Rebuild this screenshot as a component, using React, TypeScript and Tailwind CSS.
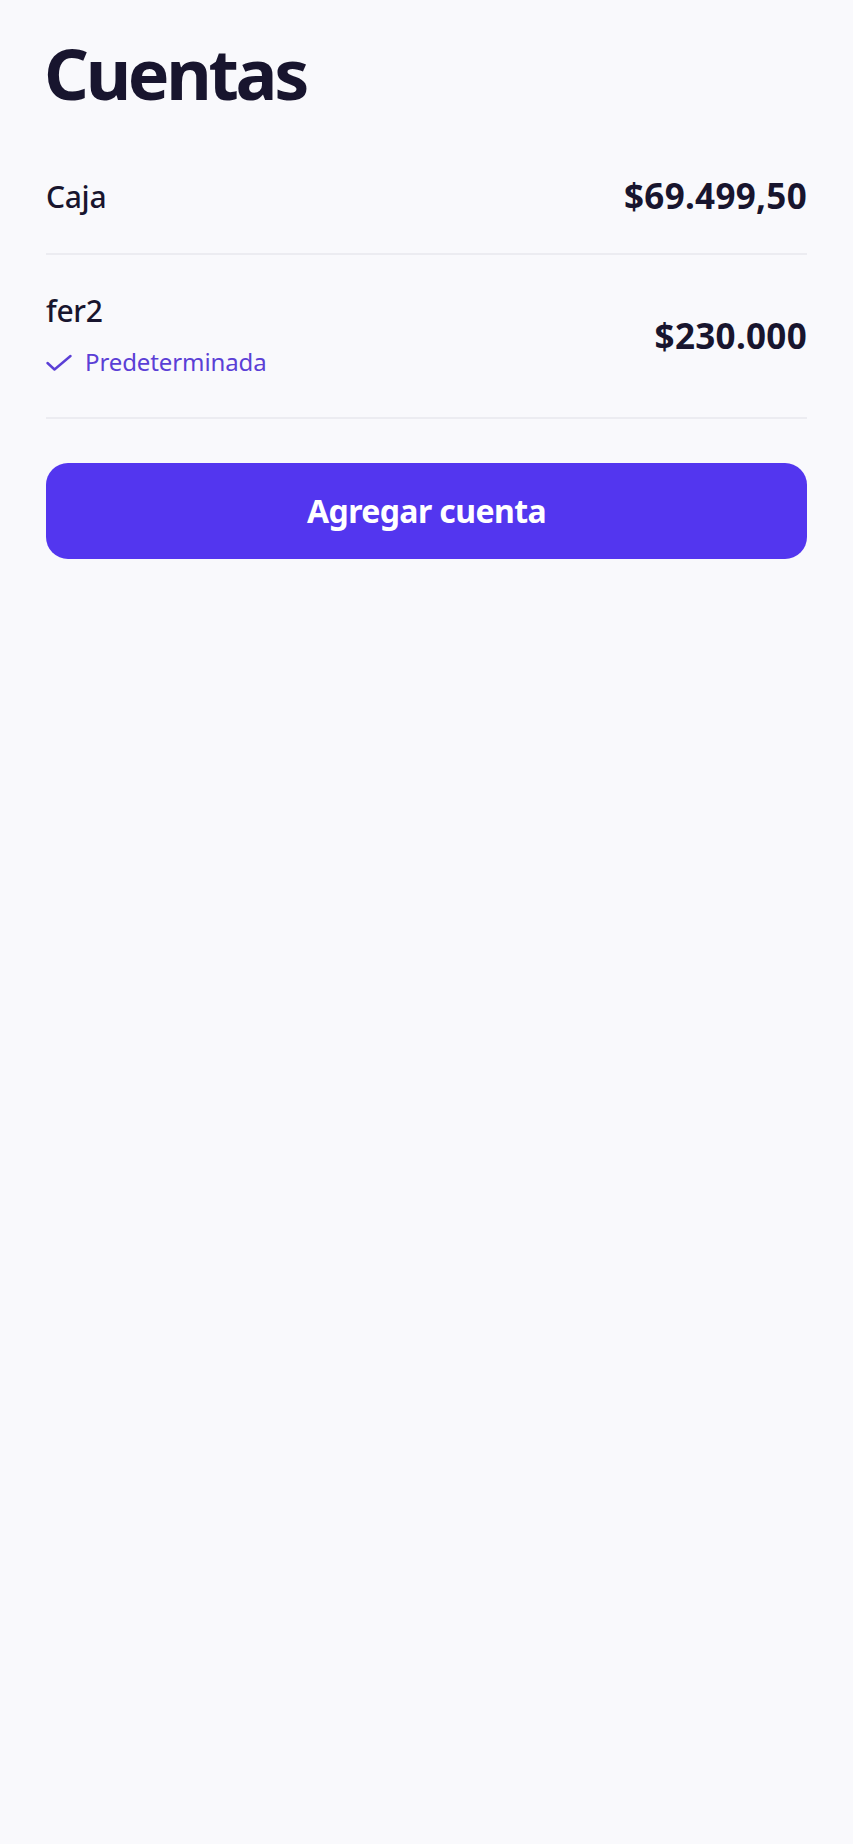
import React from "react";

const font = { fontFamily: '"Noto Sans", "Open Sans", sans-serif' };

export default function App() {
  return (
    <div
      className="min-h-screen w-full bg-[#f9f9fc] px-[46px] pt-[33px] text-[#18152e]"
      style={font}
    >
      <h1 className="-ml-[2px] text-[70px] font-bold leading-[80px] tracking-[-3.3px] text-[#18152e]">
        Cuentas
      </h1>

      <div className="mt-[26px]">
        <div className="flex items-center justify-between border-b-2 border-[#ececf1] py-[32px]">
          <span className="text-[30px] font-medium leading-[45px] tracking-[-0.3px]">Caja</span>
          <span className="text-[35px] font-bold leading-[50px] tracking-[0.3px]">$69.499,50</span>
        </div>

        <div className="flex items-center justify-between border-b-2 border-[#ececf1] py-[32px]">
          <div className="flex flex-col">
            <span className="text-[30px] font-medium leading-[48px] tracking-[-0.3px]">fer2</span>
            <div className="mt-[4px] flex items-center gap-[13px] text-[24px] leading-[46px] text-[#5b3fd6]">
              <svg
                width="26"
                height="18"
                viewBox="0 0 26 18"
                fill="none"
                stroke="#5b3fd6"
                strokeWidth="2.4"
                strokeLinecap="round"
                strokeLinejoin="round"
                className="mt-[2px] shrink-0"
              >
                <polyline points="1.5 9 8.5 15.5 24.5 2" />
              </svg>
              <span className="tracking-[-0.1px]">Predeterminada</span>
            </div>
          </div>
          <span className="text-[35px] font-bold leading-[50px] tracking-[0.3px]">$230.000</span>
        </div>
      </div>

      <button
        type="button"
        className="mt-[44px] flex h-[96px] w-full items-center justify-center rounded-[22px] bg-[#5336ef] text-[32px] font-bold tracking-[-0.6px] text-white"
      >
        Agregar cuenta
      </button>
    </div>
  );
}
